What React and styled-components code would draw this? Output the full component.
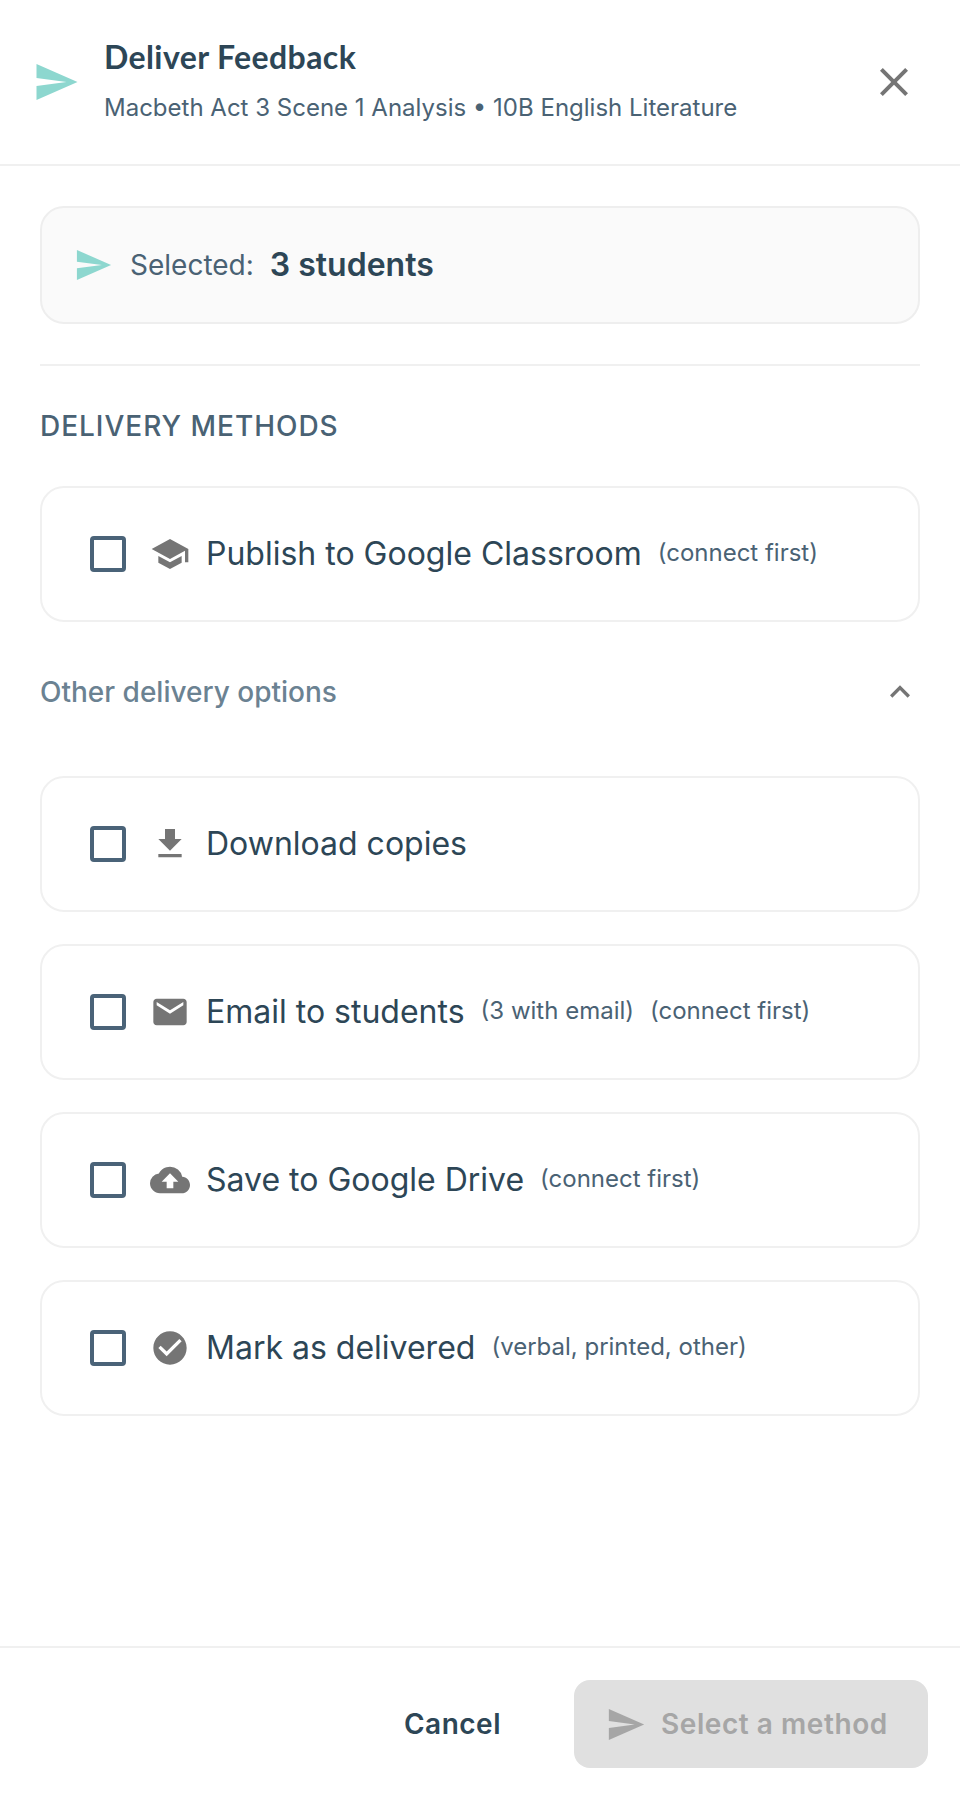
import React from 'react';
import styled, { createGlobalStyle } from 'styled-components';
import {
  MdSchool,
  MdFileDownload,
  MdEmail,
  MdCloudUpload,
  MdCheckCircle,
  MdClose,
  MdExpandLess,
} from 'react-icons/md';

const GlobalStyle = createGlobalStyle`
  html, body {
    margin: 0;
    padding: 0;
    background: #fff;
  }
  body {
    font-family: Inter, "Liberation Sans", sans-serif;
    color: #2d4656;
  }
`;

const Page = styled.div`
  width: 960px;
  height: 1800px;
  display: flex;
  flex-direction: column;
  background: #fff;
`;

const Header = styled.header`
  height: 166px;
  box-sizing: border-box;
  border-bottom: 2px solid #f0f0f0;
  display: flex;
  align-items: center;
  padding: 0 42px 0 36px;
`;

const TitleBlock = styled.div`
  flex: 1;
  margin-left: 26px;
  display: flex;
  flex-direction: column;
  gap: 15px;
`;

const Title = styled.h1`
  margin: 0;
  font-family: Lato, sans-serif;
  font-size: 32px;
  line-height: 36px;
  font-weight: 700;
  letter-spacing: 0.4px;
  color: #2d4656;
`;

const Subtitle = styled.div`
  font-size: 24px;
  line-height: 36px;
  color: #4a6274;
`;

const CloseButton = styled.div`
  display: flex;
  color: #757575;
`;

const Content = styled.main`
  flex: 1;
  padding: 40px 40px 0;
`;

const SelectedBox = styled.div`
  height: 118px;
  box-sizing: border-box;
  border: 2px solid #eeeeee;
  border-radius: 24px;
  background: #fafafa;
  display: flex;
  align-items: center;
  padding-left: 34px;
`;

const SelectedLabel = styled.span`
  margin-left: 18px;
  font-size: 28px;
  color: #4a6274;
`;

const SelectedValue = styled.span`
  margin-left: 16px;
  margin-bottom: 1px;
  font-size: 32px;
  font-weight: 600;
  color: #2d4656;
`;

const Divider = styled.div`
  height: 2px;
  background: #f0f0f0;
  margin-top: 40px;
`;

const SectionTitle = styled.h2`
  margin: 42px 0 42px;
  font-size: 28px;
  line-height: 36px;
  font-weight: 500;
  letter-spacing: 0.98px;
  color: #4a6274;
`;

const Card = styled.label`
  height: 136px;
  box-sizing: border-box;
  border: 2px solid #f0f0f0;
  border-radius: 24px;
  display: flex;
  align-items: center;
  padding-left: 48px;
`;

const Checkbox = styled.span`
  width: 36px;
  height: 36px;
  box-sizing: border-box;
  border: 4px solid #4a6378;
  border-radius: 4px;
`;

const IconSlot = styled.span`
  width: 40px;
  height: 40px;
  margin-left: 24px;
  display: flex;
  color: #757575;
`;

const OptionLabel = styled.span`
  margin-left: 16px;
  margin-bottom: 2px;
  font-size: 32px;
  color: #2d4656;
`;

const OptionNote = styled.span`
  margin-left: 16px;
  margin-bottom: 4px;
  font-size: 24px;
  color: #4a6274;
`;

const OtherRow = styled.div`
  height: 40px;
  margin: 50px 0 64px;
  display: flex;
  align-items: center;
  justify-content: space-between;
  font-size: 28px;
  font-weight: 500;
  color: #6b8292;
`;

const ChevronSlot = styled.span`
  display: flex;
  color: #757575;
`;

const CardList = styled.div`
  display: flex;
  flex-direction: column;
  gap: 32px;
`;

const Footer = styled.footer`
  height: 154px;
  box-sizing: border-box;
  border-top: 2px solid #f0f0f0;
  display: flex;
  align-items: center;
  justify-content: flex-end;
  padding: 0 32px 0 0;
  gap: 73px;
`;

const CancelButton = styled.span`
  font-size: 28px;
  font-weight: 600;
  letter-spacing: 0.5px;
  color: #2d4656;
`;

const SubmitButton = styled.div`
  width: 354px;
  height: 88px;
  border-radius: 16px;
  background: #e0e0e0;
  color: #a6a6a6;
  display: flex;
  align-items: center;
  padding-left: 34px;
  box-sizing: border-box;
  gap: 16px;
  font-size: 28px;
  font-weight: 600;
  letter-spacing: 0.56px;
`;

const SendIcon = ({ width, height, color }) => (
  <svg width={width} height={height} viewBox="0 0 41 36" fill={color}>
    <path d="M0 0 41 18 0 36 0 22 30 18 0 14Z" />
  </svg>
);

const options = [
  { icon: MdFileDownload, label: 'Download copies', notes: [] },
  { icon: MdEmail, label: 'Email to students', notes: ['(3 with email)', '(connect first)'] },
  { icon: MdCloudUpload, label: 'Save to Google Drive', notes: ['(connect first)'] },
  { icon: MdCheckCircle, label: 'Mark as delivered', notes: ['(verbal, printed, other)'] },
];

const Option = ({ icon: Icon, label, notes }) => (
  <Card>
    <Checkbox />
    <IconSlot>
      <Icon size={40} />
    </IconSlot>
    <OptionLabel>{label}</OptionLabel>
    {notes.map((n) => (
      <OptionNote key={n}>{n}</OptionNote>
    ))}
  </Card>
);

export default function App() {
  return (
    <Page>
      <GlobalStyle />
      <Header>
        <SendIcon width={42} height={36} color="#8dd7cf" />
        <TitleBlock>
          <Title>Deliver Feedback</Title>
          <Subtitle>Macbeth Act 3 Scene 1 Analysis • 10B English Literature</Subtitle>
        </TitleBlock>
        <CloseButton>
          <MdClose size={48} />
        </CloseButton>
      </Header>
      <Content>
        <SelectedBox>
          <SendIcon width={36} height={30} color="#8dd7cf" />
          <SelectedLabel>Selected:</SelectedLabel>
          <SelectedValue>3 students</SelectedValue>
        </SelectedBox>
        <Divider />
        <SectionTitle>DELIVERY METHODS</SectionTitle>
        <Option icon={MdSchool} label="Publish to Google Classroom" notes={['(connect first)']} />
        <OtherRow>
          Other delivery options
          <ChevronSlot>
            <MdExpandLess size={40} />
          </ChevronSlot>
        </OtherRow>
        <CardList>
          {options.map((o) => (
            <Option key={o.label} {...o} />
          ))}
        </CardList>
      </Content>
      <Footer>
        <CancelButton>Cancel</CancelButton>
        <SubmitButton>
          <SendIcon width={37} height={31} color="#a6a6a6" />
          Select a method
        </SubmitButton>
      </Footer>
    </Page>
  );
}
